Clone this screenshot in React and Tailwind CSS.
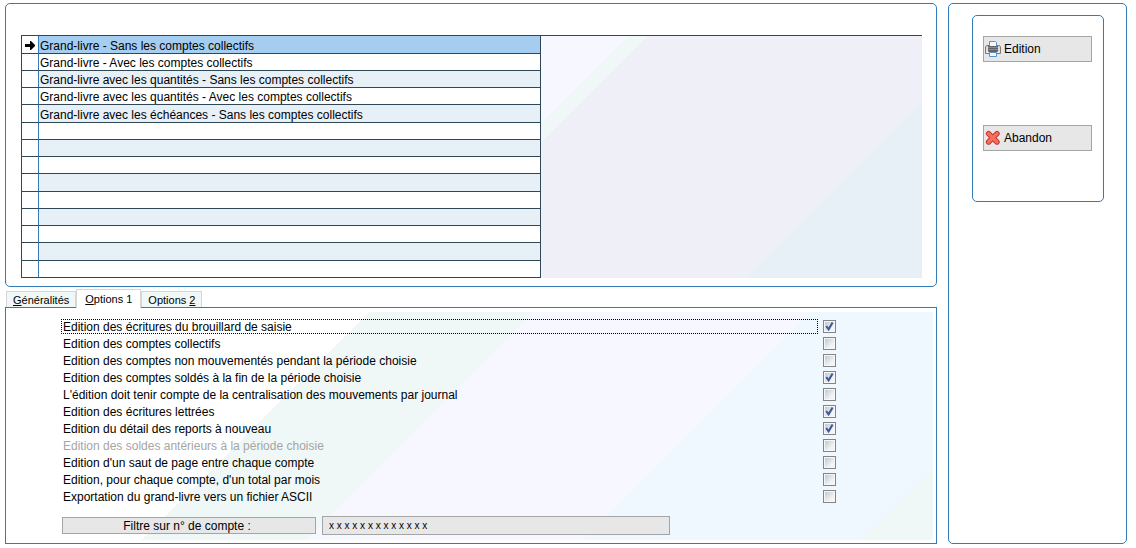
const reports = [
  'Grand-livre - Sans les comptes collectifs',
  'Grand-livre - Avec les comptes collectifs',
  'Grand-livre avec les quantités - Sans les comptes collectifs',
  'Grand-livre avec les quantités - Avec les comptes collectifs',
  'Grand-livre avec les échéances - Sans les comptes collectifs',
  '', '', '', '', '', '', '', '', '',
];

const options = [
  { id: 'brouillard', label: 'Edition des écritures du brouillard de saisie', checked: true, focused: true },
  { id: 'collectifs', label: 'Edition des comptes collectifs' },
  { id: 'non-mouvementes', label: 'Edition des comptes non mouvementés pendant la période choisie' },
  { id: 'soldes', label: 'Edition des comptes soldés à la fin de la période choisie', checked: true },
  { id: 'centralisation', label: "L'édition doit tenir compte de la centralisation des mouvements par journal" },
  { id: 'lettrees', label: 'Edition des écritures lettrées', checked: true },
  { id: 'reports', label: 'Edition du détail des reports à nouveau', checked: true },
  { id: 'anterieurs', label: 'Edition des soldes antérieurs à la période choisie', disabled: true },
  { id: 'saut', label: "Edition d'un saut de page entre chaque compte" },
  { id: 'total', label: "Edition, pour chaque compte, d'un total par mois" },
  { id: 'ascii', label: 'Exportation du grand-livre vers un fichier ASCII' },
];

function ArrowIcon() {
  return (
    <svg viewBox="0 0 10 10" className="mx-auto block size-[10px]" aria-hidden="true">
      <path d="M0 4h5V1h1l4 4v1L6 10H5V7H0z" fill="#000" />
    </svg>
  );
}

function PrinterIcon() {
  return (
    <svg viewBox="0 0 16 16" className="size-4 shrink-0" aria-hidden="true">
      <path d="M1.5 4.5h13l1 1.5v6.5H.5V6z" fill="#dcdcdc" stroke="#7b7b7b" />
      <path d="M4.5.5h6l1 1v4h-7z" fill="#f0f7fd" stroke="#5b94c4" />
      <path d="M3 5h10v6H3z" fill="#636363" />
      <path d="M3 6.5h10M3 8.5h10" stroke="#8a8a8a" />
      <path d="M1.5 10.5h2v1h-2zM12.5 10.5h2v1h-2z" fill="#fff" />
      <path d="M4.5 11.5h7v4h-7z" fill="#f2f8fd" stroke="#5b94c4" />
    </svg>
  );
}

function CrossIcon() {
  return (
    <svg viewBox="0 0 16 16" className="size-4 shrink-0" aria-hidden="true">
      <path d="M3.6 3.6L12 12M12 3.6L3.6 12" stroke="#c5372c" strokeWidth="5.4" strokeLinecap="round" />
      <path d="M3.6 3.6L12 12M12 3.6L3.6 12" stroke="#f4705c" strokeWidth="3.4" strokeLinecap="round" />
    </svg>
  );
}

function ReportTable() {
  return (
    <div className="flex border-t border-[#2f4858]">
      <table className="w-[520px] shrink-0 table-fixed border-separate border-spacing-0 border-l border-[#2f4858] bg-white">
        <colgroup>
          <col className="w-4" />
          <col />
        </colgroup>
        <tbody>
          {reports.map((name, i) => (
            <tr key={i} className={i % 4 === 0 ? 'h-[18px]' : 'h-[17px]'}>
              <td className="border-b border-[#2f4858] p-0">{i === 0 && <ArrowIcon />}</td>
              <td
                className={`border-r border-b border-l border-[#2f4858] border-l-[#337ab7] p-0 pt-[2px] pl-px leading-[14px] ${
                  i === 0 ? 'bg-[#a5cdef]' : i % 2 === 0 ? 'bg-[#e7eff7]' : 'bg-white'
                }`}
              >
                {name}
              </td>
            </tr>
          ))}
        </tbody>
      </table>
      <div className="grow bg-[linear-gradient(135deg,#f7f7ff_62px,#eff7f7_62px,#eff7f7_75px,#efeff7_75px,#efeff7_316px,#e7eff7_316px)]" />
    </div>
  );
}

function OptionRow({ id, label, checked, disabled, focused }) {
  return (
    <div className="flex h-[17px] items-center gap-[5px]">
      <label
        htmlFor={id}
        className={`flex h-[15px] w-[757px] min-w-0 items-center border border-dotted pl-px leading-none ${
          focused ? 'border-black' : 'border-transparent'
        } ${disabled ? 'text-[#a5a5a5]' : 'text-black'}`}
      >
        {label}
      </label>
      <span className="grid shrink-0">
        <input
          id={id}
          type="checkbox"
          defaultChecked={checked}
          disabled={disabled}
          className="peer col-start-1 row-start-1 size-[13px] appearance-none border border-[#848484] bg-[linear-gradient(135deg,#b8c4cc,#f4f4f6_70%)] bg-content-box p-px shadow-[inset_0_0_0_1px_#f7f7f7]"
        />
        <svg viewBox="0 0 13 13" className="pointer-events-none invisible col-start-1 row-start-1 size-[13px] peer-checked:visible" aria-hidden="true">
          <path d="M3.2 6L5.6 9.3L9.6 2.5" fill="none" stroke="#3f5a9c" strokeWidth="2.1" />
        </svg>
      </span>
    </div>
  );
}

function Tab({ selected, children }) {
  return (
    <button
      type="button"
      role="tab"
      aria-selected={selected}
      className={
        selected
          ? 'relative z-10 -mb-px h-[19px] border border-b-0 border-[#d6d6d6] bg-white px-2 pb-px leading-4'
          : 'h-4 border border-b-0 border-[#d6d6d6] bg-[#eff7f7] px-[6px] pt-px leading-[14px]'
      }
    >
      {children}
    </button>
  );
}

export default function App() {
  return (
    <div className="flex min-h-screen gap-[11px] bg-white pt-[3px] pr-[9px] pb-1 pl-[5px] font-['Liberation_Sans',Arial,sans-serif] text-[12px] text-black">
      <main className="flex min-w-0 grow flex-col">
        <section className="rounded-[5px] border border-[#337ab7] px-[15px] pt-[31px] pb-2 pr-[14px]">
          <ReportTable />
        </section>

        <div role="tablist" className="flex items-end pt-[2px] pl-px text-[11px]">
          <Tab><u>G</u>énéralités</Tab>
          <Tab selected><u>O</u>ptions 1</Tab>
          <Tab>Options <u>2</u></Tab>
        </div>

        <section role="tabpanel" className="flex grow flex-col border border-[#337ab7] px-[3px] pt-1 pb-[3px]">
          <div className="flex grow flex-col bg-[linear-gradient(135deg,#fff_255px,#eff7f7_255px,#eff7f7_371px,#f7f7ff_371px,#f7f7ff_567px,#eff7ff_567px,#eff7ff_763px,#eff7f7_763px)] pt-[6px] pl-[52px]">
            {options.map((o) => (
              <OptionRow key={o.id} {...o} />
            ))}
            <div className="mt-[11px] flex items-center gap-[6px] pl-px">
              <button type="button" className="h-[17px] w-[254px] border border-[#a5a5a5] bg-[#e7e7e7] pr-1 leading-none">
                Filtre sur n° de compte :
              </button>
              <input
                aria-label="Filtre sur n° de compte"
                defaultValue="x x x x x x x x x x x x x"
                className="h-[19px] w-[348px] border border-[#a5a5a5] bg-[#e7e7e7] px-[6px] text-[10px]"
              />
            </div>
          </div>
        </section>
      </main>

      <aside className="w-[179px] shrink-0 rounded-[5px] border border-[#337ab7] pt-[11px] pr-[22px] pl-[23px]">
        <div className="flex h-[187px] flex-col gap-[63px] rounded-[5px] border border-[#337ab7] pt-5 pr-[11px] pl-[10px]">
          <button type="button" className="flex h-[26px] items-center gap-[3px] border border-[#a5a5a5] bg-[#e7e7e7] pl-px">
            <PrinterIcon />
            Edition
          </button>
          <button type="button" className="flex h-[26px] items-center gap-[3px] border border-[#a5a5a5] bg-[#e7e7e7] pl-px">
            <CrossIcon />
            Abandon
          </button>
        </div>
      </aside>
    </div>
  );
}
